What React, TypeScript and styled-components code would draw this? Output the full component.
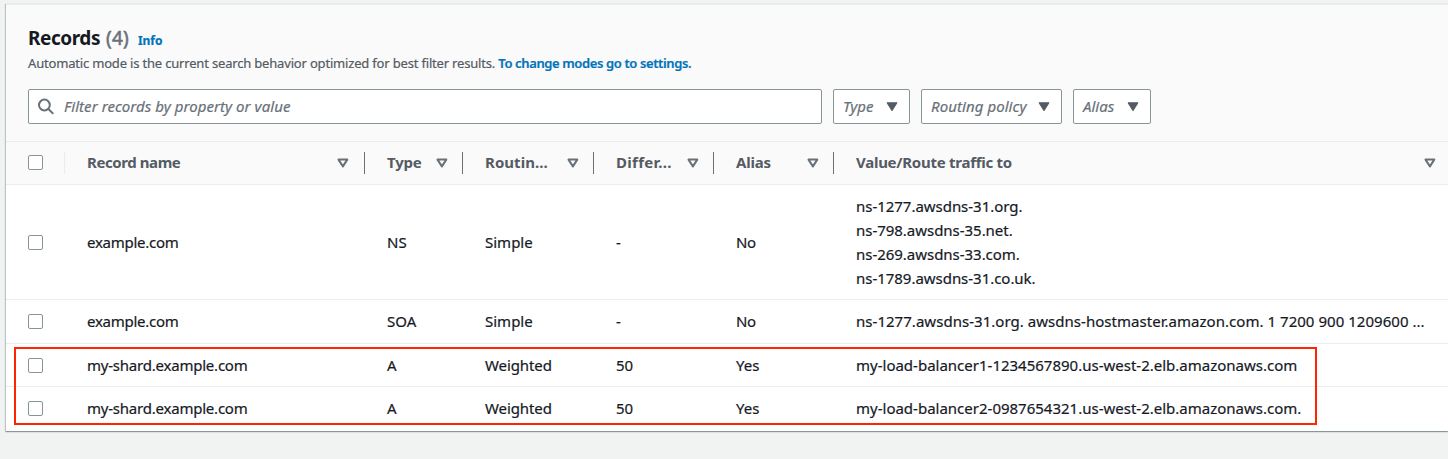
import React from "react";
import styled, { createGlobalStyle } from "styled-components";

const GlobalStyle = createGlobalStyle`
  * { box-sizing: border-box; }
  body {
    margin: 0;
    background: #f1f3f3;
    font-family: "Noto Sans", "Open Sans", sans-serif;
    font-size: 15px;
    color: #16191f;
    overflow: hidden;
    -webkit-text-stroke: 0.2px;
  }
`;

const Page = styled.main`
  height: 459px;
  padding: 3px 0 0 6px;
  overflow: hidden;
`;

const Panel = styled.section`
  position: relative;
  height: 428px;
  background: #fff;
  border-top: 2px solid #e9ecec;
  box-shadow: 0 1px 1px 0 rgba(0, 28, 36, 0.3), -1px 1px 1px 0 rgba(0, 28, 36, 0.18);
`;

const Header = styled.header`
  height: 137px;
  padding: 21px 22px 0;
  background: #fafafa;
  border-bottom: 1px solid #eaeded;
`;

const TitleRow = styled.div`
  display: flex;
  align-items: baseline;
  height: 25px;
  line-height: 25px;
`;

const Title = styled.h2`
  margin: 0;
  font-size: 19px;
  font-weight: 700;
  letter-spacing: -0.45px;
  -webkit-text-stroke: 0;
`;

const Count = styled.span`
  margin-left: 6px;
  font-size: 19px;
  color: #687078;
  letter-spacing: 0.2px;
  -webkit-text-stroke: 0.5px;
`;

const InfoLink = styled.a`
  margin-left: 9px;
  font-size: 12px;
  font-weight: 700;
  color: #0073bb;
`;

const Description = styled.p`
  margin: 2px 0 0;
  height: 20px;
  line-height: 20px;
  font-size: 13px;
  letter-spacing: -0.18px;
  color: #545b64;
  white-space: nowrap;
`;

const SettingsLink = styled.a`
  font-weight: 600;
  letter-spacing: -0.38px;
  color: #0073bb;
`;

const Filters = styled.div`
  display: flex;
  gap: 11px;
  margin-top: 16px;
`;

const Control = styled.div<{ $width: number }>`
  display: flex;
  align-items: center;
  width: ${(p) => p.$width}px;
  height: 35px;
  padding: 0 10px 0 8px;
  background: #fff;
  border: 1px solid #879596;
  border-radius: 2px;
  font-style: italic;
  line-height: 20px;
  color: #687078;
  white-space: nowrap;
`;

const SelectControl = styled(Control)`
  justify-content: space-between;
  padding: 0 11px 0 9px;
`;

const Label = styled.span<{ $spacing?: number }>`
  padding-bottom: 1px;
  letter-spacing: ${(p) => p.$spacing ?? 0}px;
`;

const SearchGlyph = styled.svg`
  width: 17px;
  height: 17px;
  margin-right: 10px;
`;

const Row = styled.div<{ $height: number; $head?: boolean }>`
  display: grid;
  grid-template-columns: 59px 300px 98px 131px 120px 120px 1fr;
  align-items: center;
  height: ${(p) => p.$height}px;
  background: ${(p) => (p.$head ? "#fafafa" : "#fff")};
  border-bottom: 1px solid #eaeded;
`;

const CheckCell = styled.div`
  padding-left: 22px;
`;

const HeadCheckCell = styled(CheckCell)`
  display: flex;
  align-items: center;
  height: 22px;
  border-right: 1px solid #eaeded;
`;

const Checkbox = styled.span`
  display: block;
  width: 15px;
  height: 15px;
  background: #fff;
  border: 1px solid #879596;
  border-radius: 2px;
`;

const HeadCheckbox = styled(Checkbox)`
  margin-bottom: 1px;
`;

const HeadCell = styled.div`
  display: flex;
  align-items: center;
  justify-content: space-between;
  height: 22px;
  padding: 0 14px 0 22px;
  font-weight: 700;
  line-height: 20px;
  color: #545b64;
  white-space: nowrap;
  border-right: 1px solid #687078;
  -webkit-text-stroke: 0;
  &:nth-child(2) { padding-right: 15px; }
  &:last-child { border-right: 0; padding-right: 12px; }
`;

const HeadLabel = styled(Label)`
  padding-bottom: 2px;
`;

const Cell = styled.div`
  margin-top: -0.5px;
  padding-left: 22px;
  line-height: 24px;
  white-space: nowrap;
`;

const Line = styled.div<{ $spacing?: number }>`
  letter-spacing: ${(p) => p.$spacing ?? 0}px;
`;

const Highlight = styled.div`
  position: absolute;
  left: 8px;
  top: 342px;
  width: 1303px;
  height: 78px;
  border: 2px solid #fe2600;
`;

const SortIcon = () => (
  <svg width="12" height="10" viewBox="0 0 12 10">
    <path d="M1.5 1.6h8.8L5.9 8.4z" fill="none" stroke="#687078" strokeWidth="2" strokeLinejoin="round" />
  </svg>
);

const CaretIcon = () => (
  <svg width="12" height="10" viewBox="0 0 12 10">
    <path d="M1 .8h10L6 8.8z" fill="#545b64" stroke="#545b64" strokeLinejoin="round" />
  </svg>
);

const filters = [
  { label: "Type", width: 77, spacing: 0 },
  { label: "Routing policy", width: 141, spacing: 0.07 },
  { label: "Alias", width: 78, spacing: 0 },
];

const columns = [
  { label: "Record name", spacing: -0.42 },
  { label: "Type", spacing: -0.2 },
  { label: "Routin...", spacing: 0.05 },
  { label: "Differ...", spacing: 0.3 },
  { label: "Alias", spacing: -0.2 },
  { label: "Value/Route traffic to", spacing: -0.26 },
];

type Field = { lines: string[]; spacing?: number };
const f = (text: string, spacing = 0): Field => ({ lines: [text], spacing });

const records: { height: number; fields: Field[] }[] = [
  {
    height: 115,
    fields: [
      f("example.com", -0.27), f("NS"), f("Simple"), f("-"), f("No", -0.3),
      { lines: ["ns-1277.awsdns-31.org.", "ns-798.awsdns-35.net.", "ns-269.awsdns-33.com.", "ns-1789.awsdns-31.co.uk."], spacing: -0.03 },
    ],
  },
  {
    height: 44,
    fields: [
      f("example.com", -0.27), f("SOA"), f("Simple"), f("-"), f("No", -0.3),
      f("ns-1277.awsdns-31.org. awsdns-hostmaster.amazon.com. 1 7200 900 1209600 ...", 0.035),
    ],
  },
  {
    height: 43,
    fields: [
      f("my-shard.example.com", -0.22), f("A"), f("Weighted", -0.1), f("50"), f("Yes"),
      f("my-load-balancer1-1234567890.us-west-2.elb.amazonaws.com"),
    ],
  },
  {
    height: 43,
    fields: [
      f("my-shard.example.com", -0.22), f("A"), f("Weighted", -0.1), f("50"), f("Yes"),
      f("my-load-balancer2-0987654321.us-west-2.elb.amazonaws.com."),
    ],
  },
];

const Records = styled.div`
  & > ${Row}:last-child { border-bottom-color: #fff; }
`;

export default function App() {
  return (
    <Page>
      <GlobalStyle />
      <Panel>
        <Header>
          <TitleRow>
            <Title>Records</Title>
            <Count>(4)</Count>
            <InfoLink>Info</InfoLink>
          </TitleRow>
          <Description>
            Automatic mode is the current search behavior optimized for best filter results.{" "}
            <SettingsLink>To change modes go to settings.</SettingsLink>
          </Description>
          <Filters>
            <Control $width={794}>
              <SearchGlyph viewBox="0 0 17 17" fill="none" stroke="#687078" strokeWidth="2">
                <circle cx="7.4" cy="7" r="5.4" />
                <path d="M11.4 11l4.9 4.9" />
              </SearchGlyph>
              <Label $spacing={0.06}>Filter records by property or value</Label>
            </Control>
            {filters.map((item) => (
              <SelectControl key={item.label} $width={item.width}>
                <Label $spacing={item.spacing}>{item.label}</Label>
                <CaretIcon />
              </SelectControl>
            ))}
          </Filters>
        </Header>
        <Records>
          <Row $height={43} $head>
            <HeadCheckCell><HeadCheckbox /></HeadCheckCell>
            {columns.map((c) => (
              <HeadCell key={c.label}>
                <HeadLabel $spacing={c.spacing}>{c.label}</HeadLabel>
                <SortIcon />
              </HeadCell>
            ))}
          </Row>
          {records.map((r, i) => (
            <Row key={i} $height={r.height}>
              <CheckCell><Checkbox /></CheckCell>
              {r.fields.map((field, j) => (
                <Cell key={j}>
                  {field.lines.map((line) => (
                    <Line key={line} $spacing={field.spacing}>{line}</Line>
                  ))}
                </Cell>
              ))}
            </Row>
          ))}
        </Records>
        <Highlight />
      </Panel>
    </Page>
  );
}
